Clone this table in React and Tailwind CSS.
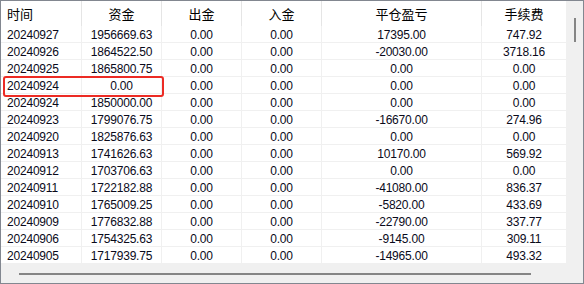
import React from "react";

const rows = [
  ["20240927", "1956669.63", "0.00", "0.00", "17395.00", "747.92"],
  ["20240926", "1864522.50", "0.00", "0.00", "-20030.00", "3718.16"],
  ["20240925", "1865800.75", "0.00", "0.00", "0.00", "0.00"],
  ["20240924", "0.00", "0.00", "0.00", "0.00", "0.00"],
  ["20240924", "1850000.00", "0.00", "0.00", "0.00", "0.00"],
  ["20240923", "1799076.75", "0.00", "0.00", "-16670.00", "274.96"],
  ["20240920", "1825876.63", "0.00", "0.00", "0.00", "0.00"],
  ["20240913", "1741626.63", "0.00", "0.00", "10170.00", "569.92"],
  ["20240912", "1703706.63", "0.00", "0.00", "0.00", "0.00"],
  ["20240911", "1722182.88", "0.00", "0.00", "-41080.00", "836.37"],
  ["20240910", "1765009.25", "0.00", "0.00", "-5820.00", "433.69"],
  ["20240909", "1776832.88", "0.00", "0.00", "-22790.00", "337.77"],
  ["20240906", "1754325.63", "0.00", "0.00", "-9145.00", "309.11"],
  ["20240905", "1717939.75", "0.00", "0.00", "-14965.00", "493.32"],
];

const widths = ["w-[81px]", "w-[80px]", "w-[80px]", "w-[80px]", "w-[160px]", "w-[84px]"];
const headers = ["时间", "资金", "出金", "入金", "平仓盈亏", "手续费"];

export default function App() {
  return (
    <div
      className="relative w-[584px] h-[284px] border border-[#828790] bg-[#f0f0f0] flex overflow-hidden"
      style={{ fontFamily: '"Liberation Sans", "Noto Sans CJK SC", sans-serif' }}
    >
      <div className="flex flex-col w-[565px]">
        <div className="h-[263px] bg-white flex flex-col">
          <div className="flex h-[25px] shrink-0">
            {headers.map((h, i) => (
              <div
                key={i}
                className={`${widths[i]} h-full flex items-center ${i === 0 ? "justify-start pl-[6px]" : "justify-center"} ${i < 5 ? "border-r border-[#e5e5e5]" : ""} text-[13px] text-black`}
                style={{ fontFamily: '"Noto Sans CJK SC", sans-serif' }}
              >
                {h}
              </div>
            ))}
          </div>
          {rows.map((r, ri) => (
            <div key={ri} className="flex h-[17px] shrink-0">
              {r.map((c, ci) => (
                <div
                  key={ci}
                  className={`${widths[ci]} h-full flex items-center pt-[1px] border-b border-[#f0f0f0] ${ci < 5 ? "border-r" : ""} ${ci === 0 ? "justify-start pl-[6px]" : "justify-center"} text-[12px] tracking-[-0.2px] leading-none text-[#0a0a1a]`}
                >
                  {c}
                </div>
              ))}
            </div>
          ))}
        </div>
        <div className="h-[19px] flex items-center pl-[18px]">
          <div className="w-[512px] h-[2px] bg-[#858585]" />
        </div>
      </div>
      <div className="w-[17px] h-full flex justify-center pt-[17px]">
        <div className="w-[2px] h-[24px] bg-[#858585] ml-[1px]" />
      </div>
      <div className="absolute left-[2px] top-[75px] w-[161px] h-[21px] border-2 border-[#ec2b24] rounded-[3px]" />
    </div>
  );
}
